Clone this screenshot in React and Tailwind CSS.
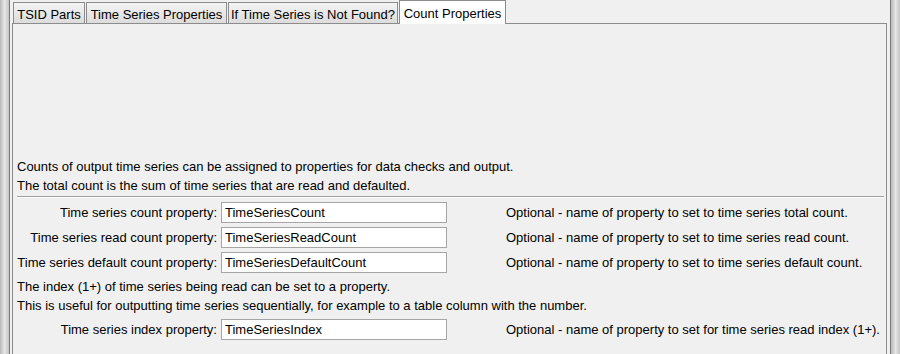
import React from 'react';

const font = { fontFamily: '"Liberation Sans", Arial, sans-serif' };

const tabs = [
  ['TSID Parts', 'w-[72px]'],
  ['Time Series Properties', 'w-[141px]'],
  ['If Time Series is Not Found?', 'w-[170px]'],
  ['Count Properties', 'w-[107px]'],
];

const rows = [
  ['Time series count property:', 'TimeSeriesCount', 'Optional - name of property to set to time series total count.'],
  ['Time series read count property:', 'TimeSeriesReadCount', 'Optional - name of property to set to time series read count.'],
  ['Time series default count property:', 'TimeSeriesDefaultCount', 'Optional - name of property to set to time series default count.'],
];

const Strip = ({ side }) => (
  <div className={`flex h-full shrink-0 ${side === 'left' ? 'flex-row' : 'flex-row-reverse'}`}>
    <div className="w-[9px] h-full bg-gradient-to-r from-[#b8b8b8] via-[#e6e6e6] to-[#c4c4c4]" />
    <div className="w-px h-full bg-[#7a7a7a]" />
    <div className="w-px h-full bg-[#f0f0f0]" />
  </div>
);

const PropRow = ({ label, value, desc }) => (
  <div className="flex items-center h-[21px]">
    <div className="w-[204px] text-right pr-[4px] text-black whitespace-nowrap">{label}</div>
    <div className="w-[226px] h-[21px] bg-white border border-[#a5a5a5] px-[3px] flex items-center">{value}</div>
    <div className="pl-[59px] text-black whitespace-nowrap">{desc}</div>
  </div>
);

export default function App() {
  return (
    <div className="w-[900px] h-[354px] bg-[#f0f0f0] flex overflow-hidden text-[13px] text-black" style={font}>
      <Strip side="left" />
      <div className="flex-1 flex flex-col pl-px">
        <div className="flex items-end h-[24px] pl-[1px] gap-[1px] relative z-10">
          {tabs.map(([t, w], i) =>
            i === 3 ? (
              <div key={t} className={`${w} h-[24px] pt-[3px] text-center bg-white border border-b-0 border-[#8c8c8c] -mb-px relative whitespace-nowrap`}>
                {t}
              </div>
            ) : (
              <div key={t} className={`${w} h-[21px] pt-[2px] text-center bg-gradient-to-b from-[#f4f4f4] to-[#dcdcdc] border border-b-0 border-[#8c8c8c] whitespace-nowrap`}>
                {t}
              </div>
            )
          )}
        </div>
        <div className="h-[340px] shrink-0 border border-[#8c8c8c] mr-[2px] flex flex-col pl-[4px] pr-[2px] pt-[133px]">
          <div className="leading-[19px]">Counts of output time series can be assigned to properties for data checks and output.</div>
          <div className="leading-[19px]">The total count is the sum of time series that are read and defaulted.</div>
          <div className="h-[2px] border-t border-[#a0a0a0] bg-white mt-[1px] mb-[4px]" />
          <div className="flex flex-col gap-[4px]">
            {rows.map(r => (
              <PropRow key={r[0]} label={r[0]} value={r[1]} desc={r[2]} />
            ))}
          </div>
          <div className="leading-[19px] mt-[4px]">The index (1+) of time series being read can be set to a property.</div>
          <div className="leading-[19px]">This is useful for outputting time series sequentially, for example to a table column with the number.</div>
          <div className="mt-[4px]">
            <PropRow label="Time series index property:" value="TimeSeriesIndex" desc="Optional - name of property to set for time series read index (1+)." />
          </div>
        </div>
      </div>
      <Strip side="right" />
    </div>
  );
}
